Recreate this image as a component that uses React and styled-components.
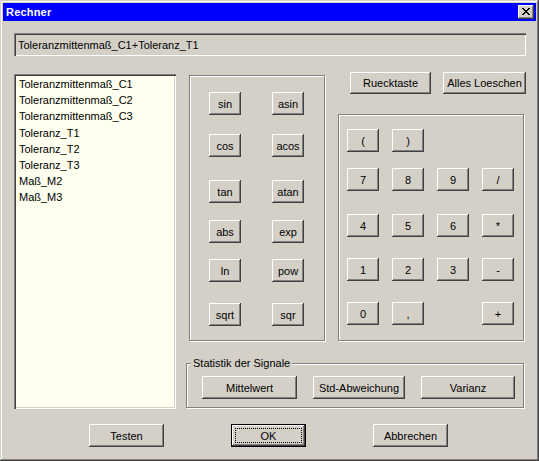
import styled, { createGlobalStyle } from "styled-components";

const GlobalStyle = createGlobalStyle`
  html, body { margin: 0; padding: 0; background: #d4d0c8; }
  * { box-sizing: border-box; }
`;

const FACE = "#d4d0c8";
const font = `11px "Liberation Sans", Arial, sans-serif`;

const functions = [
  { mt: 16, keys: ["sin", "asin"] },
  { mt: 19, keys: ["cos", "acos"] },
  { mt: 23, keys: ["tan", "atan"] },
  { mt: 17, keys: ["abs", "exp"] },
  { mt: 16, keys: ["ln", "pow"] },
  { mt: 21, keys: ["sqrt", "sqr"] },
];

const numpad = [
  { mt: 14, keys: ["(", ")"] },
  { mt: 16, keys: ["7", "8", "9", "/"] },
  { mt: 23, keys: ["4", "5", "6", "*"] },
  { mt: 21, keys: ["1", "2", "3", "-"] },
  { mt: 21, keys: ["0", ",", null, "+"] },
];

const signals = [
  "Toleranzmittenmaß_C1",
  "Toleranzmittenmaß_C2",
  "Toleranzmittenmaß_C3",
  "Toleranz_T1",
  "Toleranz_T2",
  "Toleranz_T3",
  "Maß_M2",
  "Maß_M3",
];

export default function App() {
  return (
    <>
      <GlobalStyle />
      <Window>
        <TitleBar>
          <Title>Rechner</Title>
          <CloseButton aria-label="Schließen">
            <svg width="8" height="7" viewBox="0 0 8 7" shapeRendering="crispEdges">
              <path d="M0 0h2v1h1v1h2v-1h1v-1h2v1h-1v1h-1v1h-1v1h1v1h1v1h1v1h-2v-1h-1v-1h-2v1h-1v1h-2v-1h1v-1h1v-1h1v-1h-1v-1h-1v-1h-1z" fill="#000" />
            </svg>
          </CloseButton>
        </TitleBar>
        <Body>
          <Expression>Toleranzmittenmaß_C1+Toleranz_T1</Expression>
          <Main>
            <SignalList>
              {signals.map((s) => (
                <ListItem key={s}>{s}</ListItem>
              ))}
            </SignalList>

            <FuncGroup>
              {functions.map((row) => (
                <FuncRow key={row.keys[0]} $mt={row.mt}>
                  {row.keys.map((k) => (
                    <Btn key={k}>{k}</Btn>
                  ))}
                </FuncRow>
              ))}
            </FuncGroup>

            <RightColumn>
              <TopButtons>
                <Btn $w={81} $h={22}>Ruecktaste</Btn>
                <Btn $w={83} $h={22}>Alles Loeschen</Btn>
              </TopButtons>
              <NumGroup>
                {numpad.map((row) => (
                  <NumRow key={row.keys.join("")} $mt={row.mt}>
                    {row.keys.map((k, i) =>
                      k === null ? <span key={i} /> : <Btn key={k}>{k}</Btn>
                    )}
                  </NumRow>
                ))}
              </NumGroup>
            </RightColumn>

            <StatsGroup>
              <Legend>Statistik der Signale</Legend>
              <StatsRow>
                <Btn $w={95}>Mittelwert</Btn>
                <Btn $w={92}>Std-Abweichung</Btn>
                <Btn $w={94}>Varianz</Btn>
              </StatsRow>
            </StatsGroup>
          </Main>

          <Footer>
            <Btn $w={75}>Testen</Btn>
            <DefaultBtn $w={75}>OK</DefaultBtn>
            <Btn $w={75}>Abbrechen</Btn>
          </Footer>
        </Body>
      </Window>
    </>
  );
}

const Window = styled.div`
  width: 539px;
  height: 461px;
  padding: 3px;
  background: ${FACE};
  display: flex;
  flex-direction: column;
  box-shadow: inset -1px -1px #404040, inset 1px 1px ${FACE},
    inset -2px -2px #808080, inset 2px 2px #fff;
  font: ${font};
  color: #000;
`;

const TitleBar = styled.div`
  height: 18px;
  background: #0000ff;
  display: flex;
  align-items: center;
  justify-content: space-between;
  padding: 0 2px 0 3px;
`;

const Title = styled.span`
  color: #fff;
  font: bold 11px "Liberation Sans", Arial, sans-serif;
  letter-spacing: 0.2px;
`;

const Btn = styled.button`
  font: ${font};
  color: #000;
  background: ${FACE};
  border: none;
  padding: 0;
  width: ${(p) => p.$w || 32}px;
  height: ${(p) => p.$h || 23}px;
  box-shadow: inset -1px -1px #404040, inset 1px 1px #fff,
    inset -2px -2px #808080, inset 2px 2px ${FACE};
  cursor: default;
`;

const CloseButton = styled(Btn)`
  width: 16px;
  height: 14px;
  display: flex;
  align-items: center;
  justify-content: center;
  padding-bottom: 1px;
`;

const DefaultBtn = styled(Btn)`
  position: relative;
  border: 1px solid #000;
  &::after {
    content: "";
    position: absolute;
    inset: 3px;
    border: 1px dotted #000;
  }
`;

const Body = styled.div`
  flex: 1;
  padding: 12px 10px 0 11px;
  display: flex;
  flex-direction: column;
`;

const sunken = `
  box-shadow: inset 1px 1px #808080, inset 2px 2px #404040,
    inset -1px -1px #fff, inset -2px -2px ${FACE};
`;

const Expression = styled.div`
  height: 23px;
  ${sunken}
  display: flex;
  align-items: center;
  padding: 0 4px;
`;

const Main = styled.div`
  margin-top: 16px;
  display: grid;
  grid-template-columns: 162px 136px 1fr;
  grid-template-rows: auto auto;
  column-gap: 13px;
`;

const SignalList = styled.div`
  grid-row: 1 / 3;
  margin: 2px 0 -1px;
  background: #fffff0;
  ${sunken}
  padding: 2px 5px;
`;

const ListItem = styled.div`
  line-height: 16.2px;
  white-space: nowrap;
`;

const etched = `
  border: 1px solid #808080;
  box-shadow: inset 1px 1px #fff, 1px 1px #fff;
`;

const FuncGroup = styled.div`
  margin-top: 3px;
  height: 266px;
  ${etched}
`;

const FuncRow = styled.div`
  display: flex;
  gap: 31px;
  padding-left: 19px;
  margin-top: ${(p) => p.$mt}px;
`;

const RightColumn = styled.div`
  display: flex;
  flex-direction: column;
`;

const TopButtons = styled.div`
  display: flex;
  gap: 12px;
  padding-left: 12px;
`;

const NumGroup = styled.div`
  margin-top: 20px;
  width: 186px;
  height: 227px;
  ${etched}
`;

const NumRow = styled.div`
  display: grid;
  grid-template-columns: repeat(4, 32px);
  column-gap: 13px;
  padding-left: 8px;
  margin-top: ${(p) => p.$mt}px;
`;

const StatsGroup = styled.div`
  grid-column: 2 / 4;
  position: relative;
  margin: 22px 0 0 -3px;
  width: 338px;
  height: 45px;
  ${etched}
`;

const Legend = styled.span`
  position: absolute;
  top: -7px;
  left: 4px;
  padding: 0 2px;
  background: ${FACE};
  line-height: 12px;
`;

const StatsRow = styled.div`
  display: flex;
  gap: 16px;
  padding: 12px 0 0 15px;
`;

const Footer = styled.div`
  margin-top: 16px;
  display: flex;
  gap: 67px;
  padding-left: 75px;
`;
